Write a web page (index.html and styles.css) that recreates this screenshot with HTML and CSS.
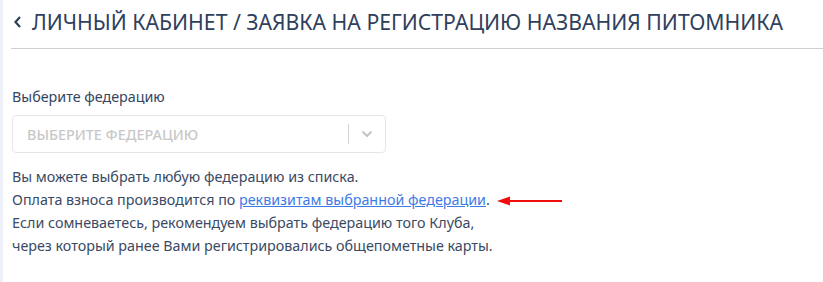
FILE: index.html
```html
<!DOCTYPE html>
<html>
    <head>
        <meta charset="utf-8">
        <link rel="stylesheet" href="styles.css">
    </head>
    <body>
        <div class="page">
            <header class="head">
                <h1 class="title">
                    <span class="back"><svg width="9" height="14" viewBox="0 0 9 14"><path d="M7 2 L2.5 7 L7 12" fill="none" stroke="#2f405c" stroke-width="2.2"/></svg></span>
                    Личный кабинет / Заявка на регистрацию названия питомника
                </h1>
            </header>
            <main class="content">
                <label class="label">Выберите федерацию</label>
                <div class="select">
                    <span class="placeholder">Выберите федерацию</span>
                    <span class="divider"></span>
                    <span class="chevron">
                        <svg width="12" height="8" viewBox="0 0 12 8"><path d="M1.5 1.5 L6 6 L10.5 1.5" fill="none" stroke="#c4c4c4" stroke-width="2"/></svg>
                    </span>
                </div>
                <div class="info">
                    <p>Вы можете выбрать любую федерацию из списка.</p>
                    <p>Оплата взноса производится по <a href="#" class="link">реквизитам выбранной федерации</a>.<span class="arrow"><svg width="68" height="10" viewBox="0 0 68 10"><path d="M66 5 H10" stroke="#f20d0d" stroke-width="2.2"/><path d="M1 5 L14 0.5 L14 9.5 Z" fill="#f20d0d"/></svg></span></p>
                    <p>Если сомневаетесь, рекомендуем выбрать федерацию того Клуба,</p>
                    <p>через который ранее Вами регистрировались общепометные карты.</p>
                </div>
            </main>
        </div>
    </body>
</html>
```
FILE: styles.css
```css
body {
    margin: 0;
    background-color: #ffffff;
    font-family: "Noto Sans", sans-serif;
    color: #374760;
}
.page {
    border-left: 3px solid #eef1f9;
    min-height: 282px;
    box-sizing: border-box;
    padding-left: 8px;
}
.head {
    border-bottom: 1px solid #cfcfcf;
    height: 49px;
    box-sizing: border-box;
    padding-top: 9px;
}
.title {
    margin: 0;
    font-size: 21.2px;
    font-weight: 400;
    text-transform: uppercase;
    color: #2f405c;
    line-height: 26px;
    display: flex;
    align-items: center;
    gap: 10px;
}
.back {
    display: flex;
    margin-left: 2px;
}
.content {
    padding-top: 38px;
    padding-left: 1px;
}
.label {
    display: block;
    font-size: 14.3px;
    line-height: 20px;
    color: #34455f;
}
.select {
    margin-top: 8px;
    width: 374px;
    height: 38px;
    box-sizing: border-box;
    border: 1px solid #e6e6e6;
    border-radius: 4px;
    display: flex;
    align-items: center;
}
.placeholder {
    flex: 1;
    padding-left: 14px;
    font-size: 14.4px;
    font-weight: 500;
    text-transform: uppercase;
    color: #c8c8c8;
}
.divider {
    width: 1px;
    height: 20px;
    background-color: #d2d2d2;
}
.chevron {
    width: 36px;
    display: flex;
    justify-content: center;
}
.info {
    margin-top: 13px;
}
.info p {
    margin: 0;
    font-size: 14.3px;
    line-height: 22.7px;
    color: #3a4a64;
}
.link {
    color: #3d7be6;
}
.arrow {
    display: inline-block;
    margin-left: 6px;
    vertical-align: middle;
}
```
